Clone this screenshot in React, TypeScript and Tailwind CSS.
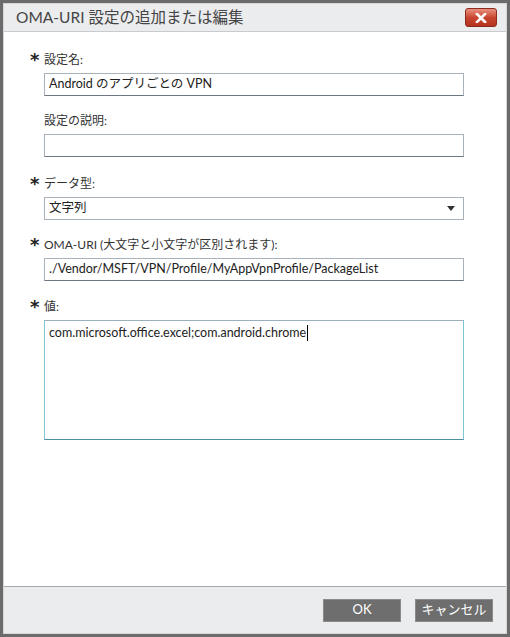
import React from "react";

const font = { fontFamily: '"Segoe UI", Lato, "Noto Sans CJK JP", sans-serif' };

function Label({ req, text }: { req?: boolean; text: string }) {
  return (
    <div className="flex items-end h-[16px]">
      <span className="w-[14px] text-[18px] leading-[16px] text-[#222] font-bold" style={{ fontFamily: '"DejaVu Sans", sans-serif' }}>
        {req ? "*" : ""}
      </span>
      <span className="text-[12px] leading-[16px] text-[#333]">{text}</span>
    </div>
  );
}

function Input({ value }: { value: string }) {
  return (
    <div className="ml-[14px] mt-[5px] h-[23px] w-[420px] border border-[#a9b1ba] border-b-[#6e7884] bg-white flex items-center px-[4px] text-[12.5px] text-[#222]">
      {value}
    </div>
  );
}

export default function App() {
  return (
    <div className="w-[510px] h-[637px] bg-[#6b6b6b] p-[3px]" style={font}>
      <div className="w-full h-full border border-[#d6d6d6] flex flex-col bg-white">
        <div className="h-[28px] bg-[#ebecee] border-b border-[#c9cbce] flex items-center justify-between pl-[12px] pr-[9px]">
          <span className="text-[15.5px] text-[#444] leading-none">OMA-URI 設定の追加または編集</span>
          <div className="w-[32px] h-[19px] rounded-[3px] border border-[#8e2a1c] bg-gradient-to-b from-[#e8907f] via-[#c9452f] to-[#b43320] flex items-center justify-center">
            <svg width="12" height="10" viewBox="0 0 12 10">
              <path d="M2 1 L10 9 M10 1 L2 9" stroke="white" strokeWidth="2.6" strokeLinecap="square" />
            </svg>
          </div>
        </div>
        <div className="flex-1 pl-[26px] pt-[20px]">
          <Label req text="設定名:" />
          <Input value="Android のアプリごとの VPN" />
          <div className="h-[17px]" />
          <Label text="設定の説明:" />
          <Input value="" />
          <div className="h-[19px]" />
          <Label req text="データ型:" />
          <div className="ml-[14px] mt-[5px] h-[23px] w-[420px] border border-[#a9b1ba] bg-white flex items-center justify-between px-[4px] pr-[8px] text-[12.5px] text-[#222]">
            <span>文字列</span>
            <svg width="8" height="5" viewBox="0 0 8 5"><path d="M0 0 L8 0 L4 5 Z" fill="#333" /></svg>
          </div>
          <div className="h-[17px]" />
          <Label req text="OMA-URI (大文字と小文字が区別されます):" />
          <Input value="./Vendor/MSFT/VPN/Profile/MyAppVpnProfile/PackageList" />
          <div className="h-[18px]" />
          <Label req text="値:" />
          <div className="ml-[14px] mt-[5px] h-[120px] w-[420px] border border-[#7ec3d6] border-b-[#4e8fa0] border-t-[#9ab0bd] bg-white px-[4px] pt-[4px] text-[12.5px] text-[#222] leading-[16px]">
            com.microsoft.office.excel;com.android.chrome<span className="inline-block w-[1px] h-[16px] bg-black align-top ml-[1px]" />
          </div>
        </div>
        <div className="h-[47px] bg-[#ebecee] border-t border-[#a7a7a7] flex items-center justify-end gap-[14px] pr-[13px]">
          <div className="w-[78px] h-[23px] bg-[#6e6e6e] border border-[#8a8a8a] text-white text-[13px] flex items-center justify-center">OK</div>
          <div className="w-[78px] h-[23px] bg-[#6e6e6e] border border-[#8a8a8a] text-white text-[13px] flex items-center justify-center">キャンセル</div>
        </div>
      </div>
    </div>
  );
}
